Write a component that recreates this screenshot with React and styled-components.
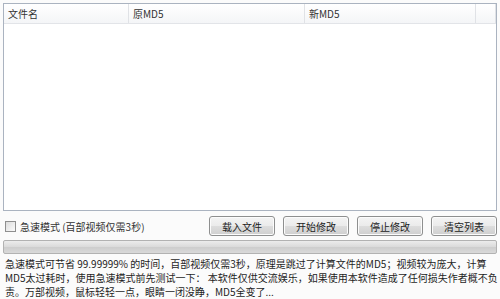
import React from 'react';
import styled, { createGlobalStyle } from 'styled-components';

const GlobalStyle = createGlobalStyle`
  html, body {
    margin: 0;
    padding: 0;
    background: #fbfbfb;
  }
  body {
    font-family: "Noto Sans CJK SC", "Liberation Sans", sans-serif;
    font-size: 10px;
    color: #1e1e1e;
  }
`;

const Window = styled.div`
  width: 500px;
  height: 299px;
  box-sizing: border-box;
  padding: 3px 3px 0 3px;
  display: flex;
  flex-direction: column;
  overflow: hidden;
`;

const ListView = styled.div`
  height: 210px;
  box-sizing: border-box;
  border: 1px solid #aab3c0;
  background: #fff;
  display: flex;
  flex-direction: column;
`;

const Header = styled.div`
  display: flex;
  height: 19px;
  background: linear-gradient(#ffffff, #f4f5f7);
  border-bottom: 1px solid #e2e4e8;
`;

const HeaderCell = styled.div`
  width: ${(p) => p.$w}px;
  flex: ${(p) => (p.$w ? '0 0 auto' : '1')};
  box-sizing: border-box;
  padding-left: 4px;
  border-right: 1px solid #e0e2e6;
  line-height: 19px;
  font-size: 10px;
  color: #333;
  white-space: nowrap;
`;

const Controls = styled.div`
  display: flex;
  align-items: center;
  height: 20px;
  margin-top: 5px;
`;

const CheckLabel = styled.label`
  display: flex;
  align-items: center;
  gap: 4px;
  padding-left: 2px;
  color: #333;
  white-space: nowrap;
  flex: 1;
`;

const Box = styled.span`
  width: 9px;
  height: 9px;
  border: 1px solid #8f8f8f;
  background: linear-gradient(135deg, #dcdcdc, #fbfbfb);
`;

const Buttons = styled.div`
  display: flex;
  gap: 8px;
`;

const Button = styled.button`
  width: 66px;
  height: 20px;
  box-sizing: border-box;
  border: 1px solid #8e8f8f;
  border-radius: 3px;
  background: linear-gradient(#f4f4f4 0%, #ebebeb 50%, #dddddd 51%, #cfcfcf 100%);
  box-shadow: inset 0 0 0 1px #fcfcfc;
  font-family: inherit;
  font-size: 10px;
  color: #222;
  padding: 0;
`;

const Progress = styled.div`
  height: 14px;
  margin-top: 4px;
  box-sizing: border-box;
  border: 1px solid #b2b2b2;
  border-radius: 2px;
  background: linear-gradient(#ececec, #dadada 50%, #cdcdcd 51%, #d9d9d9);
`;

const Notes = styled.div`
  margin-top: 3px;
  padding-left: 2px;
  line-height: 14px;
  font-size: 10px;
  color: #1e1e1e;
`;

const Line = styled.div`
  white-space: nowrap;
`;

export default function App() {
  return (
    <>
      <GlobalStyle />
      <Window>
        <ListView>
          <Header>
            <HeaderCell $w={125}>文件名</HeaderCell>
            <HeaderCell $w={176}>原MD5</HeaderCell>
            <HeaderCell $w={171}>新MD5</HeaderCell>
            <HeaderCell />
          </Header>
        </ListView>
        <Controls>
          <CheckLabel>
            <Box />
            急速模式 (百部视频仅需3秒)
          </CheckLabel>
          <Buttons>
            <Button>载入文件</Button>
            <Button>开始修改</Button>
            <Button>停止修改</Button>
            <Button>清空列表</Button>
          </Buttons>
        </Controls>
        <Progress />
        <Notes>
          <Line>急速模式可节省 99.99999% 的时间，百部视频仅需3秒，原理是跳过了计算文件的MD5；视频较为庞大，计算</Line>
          <Line>MD5太过耗时，使用急速模式前先测试一下： 本软件仅供交流娱乐，如果使用本软件造成了任何损失作者概不负</Line>
          <Line>责。万部视频，鼠标轻轻一点，眼睛一闭没睁，MD5全变了...</Line>
        </Notes>
      </Window>
    </>
  );
}
